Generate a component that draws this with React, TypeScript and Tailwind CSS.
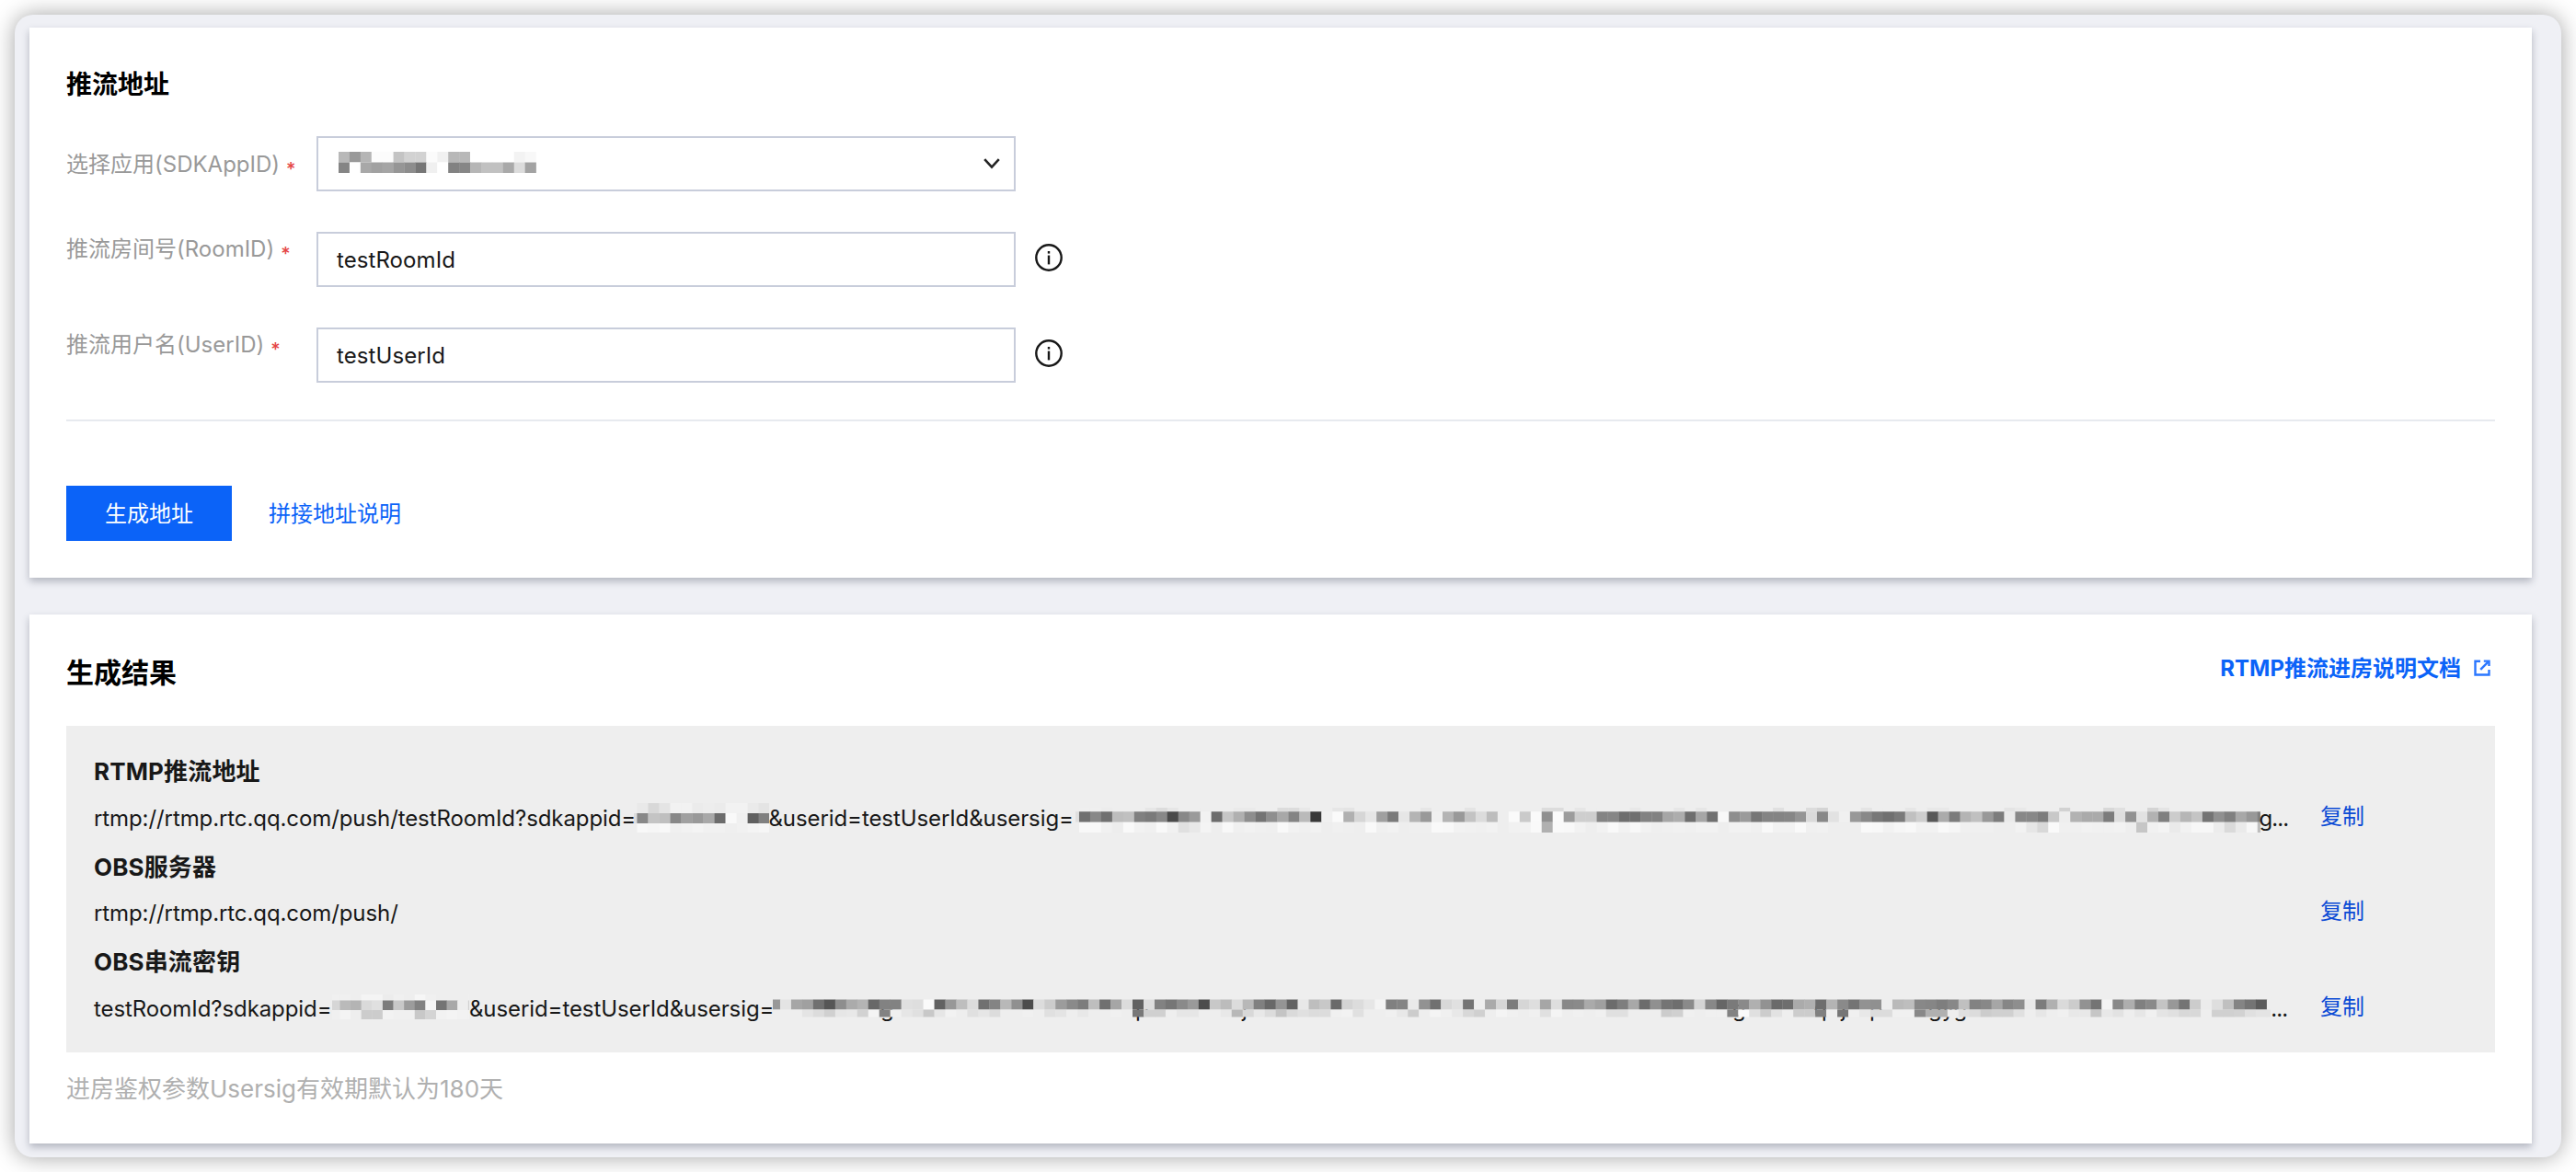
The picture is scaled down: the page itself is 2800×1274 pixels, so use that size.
import { useState, type ReactNode } from "react";

type MosaicRow = {
  y: number;
  height: number;
  cells: string;
};

interface MosaicProps {
  width: number;
  height?: number;
  // shift of the cell grid relative to the left edge
  offset?: number;
  cell?: number;
  rows: MosaicRow[];
  tails?: { x: number; char: string }[];
}

const APP_NAME_ROWS: MosaicRow[] = [
  { y: 0, height: 11.5, cells: "b8 99 b5 fc fc c4 d2 d2 fb f1 b8 b8 ff ff ff ff f3 f8" },
  { y: 11.5, height: 11.5, cells: "85 ff a8 a1 a5 96 8d 76 f0 ff 82 86 b6 c1 c1 a9 dc a3" },
];

const PUSH_APPID_ROWS: MosaicRow[] = [
  { y: 8, height: 11, cells: "ee e9 d8 e4 f2 f2 eb ed eb f2 f2 ea e4" },
  { y: 19, height: 11, cells: "dd 88 c4 bf 88 a0 99 a8 6c f9 f0 60 80" },
  { y: 30, height: 10, cells: "ee f8 f6 f8 f0 f2 f4 f1 f1 ef f1 f4 f6" },
];

const PUSH_SIG_ROWS: MosaicRow[] = [
  {
    y: 13,
    height: 4.5,
    cells:
      "ee ef ef ec ee ee ee e6 dc e6 ee ee ee ee ee ea ea ee ee dc dc e8 ee ee e6 e4 ee ee ee ee ee ee e6 ee ee ee e4 ee ee ee ee ee ee dc dc ee e6 ee ee ee ee e8 ee ee ee e6 ee e6 ee ee ee ee ee ee e0 ee ee dc d4 ee ee ee e4 ee ee ee e6 ee e8 e8 ee ee ee ee ee e4 e8 ee ee ee d2 ee ee ee d8 e0 ee ee d4 e4 ee ee ee ee ee ee ee ee ee",
  },
  {
    y: 17.25,
    height: 11.5,
    cells:
      "e0 70 88 70 bd c0 80 7a 88 4a 88 9a f2 6c c6 b0 8e 74 8f a8 84 ba 38 f0 fa b0 d6 e6 a0 7a e6 b4 99 f0 b4 99 c3 dc bd ee fa ca fa 90 fa 9c ce ce 84 86 6e 70 82 82 a6 ad 6e a6 70 f8 8e 9a 76 84 84 86 94 da 88 e2 f0 98 88 78 70 7a c0 ce 58 ab 7c b4 c0 98 7c ea 88 88 7c c8 ee b2 aa aa 7c de 92 e2 b2 80 cc b6 c4 74 90 80 a8 98 80",
  },
  {
    y: 28.75,
    height: 11.25,
    cells:
      "ee f8 f8 f1 ed f9 f2 f0 f9 f1 e0 e8 f4 ee f8 f0 f2 f0 ef f9 f2 f0 f2 ee f0 ef ee f9 f0 f2 ee ef ef f9 f8 f2 f1 f0 f2 ee f1 f2 f9 b0 f9 f8 f2 ee f2 f9 f2 f8 f2 ef f0 f1 f0 f2 f2 ee f2 f2 f0 f9 f2 f2 f9 f0 f1 ee ee ee f9 f8 f2 f6 f8 f2 f2 f9 f6 f0 f0 f0 ee ee f2 e6 d8 fa f0 f0 f2 f1 f1 f2 ee c6 f1 f4 ea f2 f7 f7 ec da ea f7 bd",
  },
];

const KEY_APPID_ROWS: MosaicRow[] = [
  { y: 9, height: 6.5, cells: "f0 f0 ee f4 f4 ec f0 ee f6 f0 ee ee ee f0" },
  { y: 15.5, height: 10.5, cells: "d6 ba b4 da e0 7c c8 9c 82 f6 74 a8 ee d0" },
  { y: 26, height: 10, cells: "f0 f4 ee cc cc f2 f0 f0 c8 d4 f2 f4 f2 f2" },
];

const KEY_SIG_ROWS: MosaicRow[] = [
  {
    y: 14.5,
    height: 11,
    cells:
      "98 e4 a6 a0 70 56 8e ab b4 68 82 82 e0 de fa 62 98 be dc 70 84 b8 90 4c dc cc 9c 8a 7c be 70 a6 dc 62 de 82 76 8a 9a 4c c8 bc dc b8 80 68 94 62 e8 be c8 6a d4 dc e6 f4 80 84 ea 92 70 d8 e0 74 ee aa d6 7c d6 de a6 de 88 8a aa a0 6c 7e a8 6c 90 74 6e 8a d4 88 66 7a 8a b0 92 6a 6e ab b0 6e b4 8a 74 92 90 ee ba be 88 86 7e 88 c0 82 88 a6 86 8e e8 7c b0 da cc 92 74 f4 88 ae 80 8a c4 98 74 cc ec de c0 84 74 5c ee",
  },
  {
    y: 25.5,
    height: 8,
    cells:
      "ee ee ee e4 dc d0 e6 e8 d2 f4 82 f0 e6 e0 c8 e6 f2 ee e0 e6 dc ee ee f0 ee e0 e4 ee e8 ee ee f0 ee 78 d0 d0 ee e6 e6 ee ee e8 b8 d8 e8 dc c4 da e0 dc dc f0 f2 e0 ee ee f0 e8 cc ee f4 f0 e8 d8 d0 ee f4 f0 ee f0 e0 f4 ee f0 ee f0 e0 e0 ee ee ee cc d0 f0 ee f0 f0 82 fa e0 cc e2 ee cc cc 80 ee 76 f0 e8 dc dc f0 f0 88 b0 b0 ee e0 dc cc d0 d0 e0 ee e6 ee f0 e8 e8 c6 e8 e2 ee e6 f0 e4 e0 d8 d8 ee d0 d0 d2 e0 e4 e4",
  },
];

const KEY_SIG_TAILS = [
  { x: 117, char: "g" },
  { x: 394, char: "p" },
  { x: 510, char: "j" },
  { x: 1043, char: "g" },
  { x: 1131, char: "q" },
  { x: 1161, char: "j" },
  { x: 1192, char: "p" },
  { x: 1256, char: "gyg" },
];

function Mosaic({ width, height = 52, offset = 0, cell = 11.97, rows, tails = [] }: MosaicProps) {
  return (
    <svg width={width} height={height} className="block shrink-0" aria-hidden="true">
      {tails.map((tail) => (
        <text key={tail.x} x={tail.x} y={33} fontSize={24} fill="#181818">
          {tail.char}
        </text>
      ))}
      {rows.map((row) =>
        row.cells.split(" ").map((shade, i) => (
          <rect
            key={`${row.y}-${i}`}
            x={offset + i * cell}
            y={row.y}
            width={cell + 0.3}
            height={row.height}
            fill={`#${shade}${shade}${shade}`}
          />
        ))
      )}
    </svg>
  );
}

function InfoIcon() {
  return (
    <svg width="30" height="30" viewBox="0 0 30 30" className="ml-[21px] mb-1 shrink-0">
      <circle cx="15" cy="15" r="13.7" fill="none" stroke="#181818" strokeWidth="2.4" />
      <rect x="13.8" y="8" width="2.4" height="2.6" fill="#181818" />
      <rect x="13.8" y="12.6" width="2.4" height="9.8" fill="#181818" />
    </svg>
  );
}

function ExternalIcon() {
  return (
    <svg width="18" height="18" viewBox="0 0 18 18" fill="none" stroke="#2b77ff" strokeWidth="2.4" className="ml-[14px]">
      <path d="M7 1.7H1.5V16.5H16.5V11" />
      <path d="M7.2 10.8L15.4 2.6" />
      <path d="M10.8 1.6H16.5V7" />
    </svg>
  );
}

function FieldLabel({ children, className }: { children: ReactNode; className: string }) {
  return (
    <label className={`w-[272px] shrink-0 whitespace-nowrap text-2xl leading-8 text-[#999] ${className}`}>
      {children}
      <span className="ml-[7px] align-[-4px] text-xl leading-none font-medium text-[#e54545]">*</span>
    </label>
  );
}

function TextField({ label, value, onChange }: { label: string; value: string; onChange: (value: string) => void }) {
  return (
    <div className="flex h-15">
      <FieldLabel className="pt-[3px]">{label}</FieldLabel>
      <input
        value={value}
        onChange={(e) => onChange(e.target.value)}
        className="h-15 w-[760px] border-2 border-[#c8cddb] bg-white px-5 text-2xl tracking-[0.08px] text-[#181818] outline-none"
      />
      <div className="flex items-center">
        <InfoIcon />
      </div>
    </div>
  );
}

function ResultItem({ title, children }: { title: string; children: ReactNode }) {
  return (
    <div>
      <h3 className="h-[51.75px] text-[26px] leading-[52px] font-bold tracking-[0.15px]">{title}</h3>
      <div className="flex h-[51.75px] text-2xl leading-[50px] tracking-[-0.09px] whitespace-nowrap">
        <div className="flex w-[2420px] shrink-0">{children}</div>
        <button className="h-11 leading-[45px] tracking-normal text-[#0b4bd5]">复制</button>
      </div>
    </div>
  );
}

export default function App() {
  const [roomId, setRoomId] = useState("testRoomId");
  const [userId, setUserId] = useState("testUserId");

  return (
    <div className="h-[1274px] w-[2800px] overflow-hidden bg-white p-4 font-['Inter','Noto_Sans_CJK_SC',sans-serif] text-[#181818]">
      <div className="flex h-[1242px] flex-col gap-10 rounded-[20px] bg-[#eff0f5] pt-[14px] pr-8 pl-4 shadow-[0_0_24px_rgba(0,0,0,0.36)]">
        {/* Push address form */}
        <section className="h-[598px] bg-white px-10 pt-10 shadow-[0_4px_8px_rgba(54,58,80,0.32)]">
          <h2 className="h-[78px] text-[28px] leading-[44px] font-bold text-black">推流地址</h2>
          <div className="flex flex-col gap-11">
            <div className="flex h-15">
              <FieldLabel className="pt-[15px]">选择应用(SDKAppID)</FieldLabel>
              <div className="flex h-15 w-[760px] items-center justify-between border-2 border-[#c8cddb] pr-[15px] pl-[22px]">
                <div className="mb-1">
                  <Mosaic width={215} height={23} cell={11.92} rows={APP_NAME_ROWS} />
                </div>
                <svg width="18" height="12" viewBox="0 0 18 12" fill="none">
                  <path d="M1.2 1.2L9 9.6L16.8 1.2" stroke="#242424" strokeWidth="2.6" />
                </svg>
              </div>
            </div>
            <TextField label="推流房间号(RoomID)" value={roomId} onChange={setRoomId} />
            <TextField label="推流用户名(UserID)" value={userId} onChange={setUserId} />
          </div>
          <hr className="mt-10 border-t-2 border-[#e7eaef]" />
          <div className="mt-[70px] flex items-center gap-10 text-2xl">
            <button className="h-15 w-45 bg-[#0b63f8] pt-0.5 text-white">生成地址</button>
            <a className="pt-0.5 text-[#0b63f8]">拼接地址说明</a>
          </div>
        </section>

        {/* Generated result */}
        <section className="h-[575px] bg-white px-10 shadow-[0_4px_8px_rgba(54,58,80,0.32)]">
          <div className="flex h-[121px] justify-between pt-10">
            <h2 className="text-[30px] leading-[47px] font-bold text-black">生成结果</h2>
            <a className="mr-[5px] flex h-9 items-center text-2xl font-bold text-[#0b63f8]">
              <span className="pt-0.5">RTMP推流进房说明文档</span>
              <ExternalIcon />
            </a>
          </div>
          <div className="h-[355px] bg-[#eee] pt-6 pl-[30px]">
            <ResultItem title="RTMP推流地址">
              <span className="w-[586.5px] shrink-0">rtmp://rtmp.rtc.qq.com/push/testRoomId?sdkappid=</span>
              <Mosaic width={147} offset={-8.6} cell={12.02} rows={PUSH_APPID_ROWS} />
              <span className="w-[333.5px] shrink-0">&amp;userid=testUserId&amp;usersig=</span>
              <Mosaic width={1287.5} offset={-8} rows={PUSH_SIG_ROWS} />
              <span className="-ml-px tracking-[-0.9px]">g...</span>
            </ResultItem>
            <ResultItem title="OBS服务器">
              <span>rtmp://rtmp.rtc.qq.com/push/</span>
            </ResultItem>
            <ResultItem title="OBS串流密钥">
              <span className="w-[259px] shrink-0">testRoomId?sdkappid=</span>
              <Mosaic width={149} offset={-3.2} cell={11.62} rows={KEY_APPID_ROWS} />
              <span className="w-[330.3px] shrink-0">&amp;userid=testUserId&amp;usersig=</span>
              <Mosaic width={1628} offset={-4} rows={KEY_SIG_ROWS} tails={KEY_SIG_TAILS} />
              <span className="tracking-[-0.9px]">...</span>
            </ResultItem>
          </div>
          <p className="mt-[21px] text-[26px] leading-[38px] text-[#b0b0b0]">进房鉴权参数Usersig有效期默认为180天</p>
        </section>
      </div>
    </div>
  );
}
